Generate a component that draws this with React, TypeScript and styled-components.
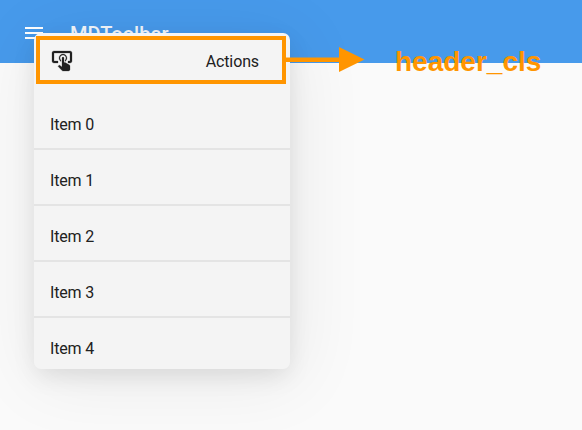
import React from "react";
import styled, { createGlobalStyle } from "styled-components";

const GlobalStyle = createGlobalStyle`
  * { box-sizing: border-box; }
  body { margin: 0; background: #fafafa; overflow: hidden; }
`;

const Screen = styled.main`
  position: relative;
  width: 582px;
  height: 430px;
  overflow: hidden;
  background: #fafafa;
  color: #212121;
  font-family: Roboto, sans-serif;
`;

const Toolbar = styled.header`
  display: flex;
  align-items: center;
  gap: 24px;
  height: 63px;
  padding: 0 22px;
  background: #479aeb;
  color: #fff;
`;

const Title = styled.h1`
  margin: 0;
  padding-top: 4px;
  font-size: 20px;
  font-weight: 500;
  letter-spacing: 0.1px;
  line-height: 24px;
  color: #f3f7fc;
`;

const MenuIcon = styled.svg`
  width: 24px;
  height: 24px;
  margin-top: 3px;
  fill: currentColor;
`;

const Menu = styled.section`
  position: absolute;
  left: 34px;
  top: 33px;
  display: flex;
  flex-direction: column;
  gap: 10px;
  width: 256px;
  height: 336px;
  padding: 3px 4px 0 2px;
  border-radius: 7px;
  background: #f4f4f4;
  box-shadow: 0 8px 24px -2px rgba(0, 0, 0, 0.1), 4px 8px 72px 4px rgba(0, 0, 0, 0.07);
`;

const MenuHeader = styled.div`
  display: flex;
  flex: none;
  align-items: center;
  justify-content: space-between;
  height: 48px;
  padding: 0 23px 0 10px;
  border: 4px solid #ff9500;
  font-size: 16px;
  line-height: 20px;
`;

const HeaderLabel = styled.span`
  padding-top: 3px;
  letter-spacing: -0.12px;
`;

const ActionIcon = styled.svg`
  width: 24px;
  height: 24px;
  margin-top: 2px;
  fill: currentColor;
  stroke: currentColor;
  stroke-width: 0.25px;
`;

const ItemList = styled.ul`
  margin: 0 -4px 0 -2px;
  padding: 0;
  list-style: none;
`;

const Item = styled.li`
  height: 56px;
  padding: 21px 16px 0;
  border-bottom: 2px solid #e4e4e4;
  font-size: 16px;
  line-height: 20px;
  letter-spacing: -0.15px;

  &:last-child {
    height: 54px;
    border-bottom: 0;
  }
`;

const Arrow = styled.svg`
  position: absolute;
  left: 285px;
  top: 46px;
  width: 80px;
  height: 27px;
  fill: #ff9500;
`;

const Callout = styled.span`
  position: absolute;
  left: 395px;
  top: 46px;
  color: #ff9500;
  font: bold 28px/32px "Liberation Sans", Arial, sans-serif;
`;

const items = ["Item 0", "Item 1", "Item 2", "Item 3", "Item 4"];

export default function App() {
  return (
    <Screen>
      <GlobalStyle />
      <Toolbar>
        <MenuIcon viewBox="0 0 24 24">
          <path d="M3 6H21V8H3V6M3 11H21V13H3V11M3 16H21V18H3V16Z" />
        </MenuIcon>
        <Title>MDToolbar</Title>
      </Toolbar>
      <Menu>
        <MenuHeader>
          <ActionIcon viewBox="0 0 24 24">
            <path d="M13 5C15.21 5 17 6.79 17 9C17 10.5 16.2 11.77 15 12.46V11.24C15.61 10.69 16 9.89 16 9C16 7.34 14.66 6 13 6S10 7.34 10 9C10 9.89 10.39 10.69 11 11.24V12.46C9.8 11.77 9 10.5 9 9C9 6.79 10.79 5 13 5M20 20.5C19.97 21.32 19.32 21.97 18.5 22H13C12.62 22 12.26 21.85 12 21.57L8 17.37L8.74 16.6C8.93 16.39 9.2 16.28 9.5 16.28H9.7L12 18V9C12 8.45 12.45 8 13 8S14 8.45 14 9V13.47L15.21 13.6L19.15 15.79C19.68 16.03 20 16.56 20 17.14V20.5M20 2H4C2.9 2 2 2.9 2 4V12C2 13.11 2.9 14 4 14H8V12H4V4H20V12H18V14H20C21.13 14 22 13.1 22 12V4C22 2.9 21.11 2 20 2Z" />
          </ActionIcon>
          <HeaderLabel>Actions</HeaderLabel>
        </MenuHeader>
        <ItemList>
          {items.map((item) => (
            <Item key={item}>{item}</Item>
          ))}
        </ItemList>
      </Menu>
      <Arrow viewBox="0 0 80 27">
        <path d="M0 11.5H54V1L79.5 13.5L54 26V16H0Z" />
      </Arrow>
      <Callout>header_cls</Callout>
    </Screen>
  );
}
